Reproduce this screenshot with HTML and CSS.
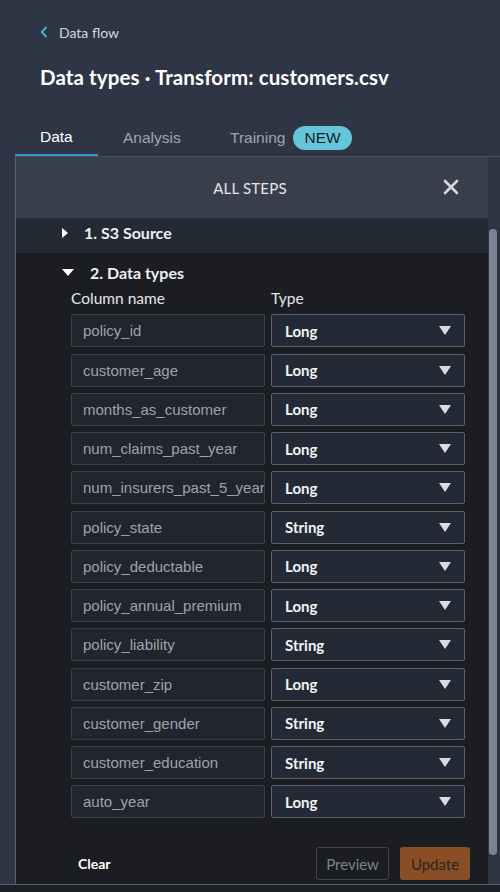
FILE: index.html
```html
<!DOCTYPE html>
<html>
<head>
<meta charset="utf-8">
<link rel="stylesheet" href="styles.css">
</head>
<body>
<div class="page">
  <div class="top">
    <div class="back">
      <svg class="chev" width="8" height="12" viewBox="0 0 8 12"><path d="M6.5 1 L1.8 6 L6.5 11" fill="none" stroke="#3fb4d0" stroke-width="2"/></svg>
      <span>Data flow</span>
    </div>
    <h1 class="title">Data types · Transform: customers.csv</h1>
    <div class="tabs">
      <div class="tab">Data</div>
      <div class="tab">Analysis</div>
      <div class="tab">Training <span class="badge">NEW</span></div>
    </div>
  </div>
  <div class="panel">
    <div class="panel-head">
      <span class="panel-title">ALL STEPS</span>
      <svg class="close" width="16" height="16" viewBox="0 0 16 16"><path d="M2 2 L14 14 M14 2 L2 14" stroke="#d5d8dc" stroke-width="2.6" stroke-linecap="round"/></svg>
    </div>
    <div class="panel-body">
      <div class="content">
        <div class="step collapsed">
          <span class="tri-right"></span>
          <span class="step-name">1. S3 Source</span>
        </div>
        <div class="step expanded">
          <span class="tri-down"></span>
          <span class="step-name">2. Data types</span>
        </div>
        <div class="grid">
          <div class="col-head">Column name</div>
          <div class="col-head">Type</div>

          <div class="inp">policy_id</div><div class="sel">Long<i></i></div>
          <div class="inp">customer_age</div><div class="sel">Long<i></i></div>
          <div class="inp">months_as_customer</div><div class="sel">Long<i></i></div>
          <div class="inp">num_claims_past_year</div><div class="sel">Long<i></i></div>
          <div class="inp">num_insurers_past_5_years</div><div class="sel">Long<i></i></div>
          <div class="inp">policy_state</div><div class="sel">String<i></i></div>
          <div class="inp">policy_deductable</div><div class="sel">Long<i></i></div>
          <div class="inp">policy_annual_premium</div><div class="sel">Long<i></i></div>
          <div class="inp">policy_liability</div><div class="sel">String<i></i></div>
          <div class="inp">customer_zip</div><div class="sel">Long<i></i></div>
          <div class="inp">customer_gender</div><div class="sel">String<i></i></div>
          <div class="inp">customer_education</div><div class="sel">String<i></i></div>
          <div class="inp">auto_year</div><div class="sel">Long<i></i></div>
        </div>
        <div class="footer">
          <span class="clear">Clear</span>
          <div class="btns">
            <span class="btn preview">Preview</span>
            <span class="btn update">Update</span>
          </div>
        </div>
      </div>
      <div class="gutter"><div class="thumb"></div></div>
    </div>
  </div>
  <div class="bottom"></div>
</div>
</body>
</html>
```

FILE: styles.css
```css
* { box-sizing: border-box; }
html, body { margin: 0; padding: 0; }
body {
  background: #2e3646;
  width: 500px;
  height: 892px;
  overflow: hidden;
  font-family: Lato, "Open Sans", sans-serif;
  color: #fff;
}
.page { display: flex; flex-direction: column; height: 892px; }
.top { padding: 23px 0 0 40px; }
.back { display: flex; align-items: center; gap: 11px; height: 18px; font-size: 14px; color: #d4d8de; }
.chev { display: block; }
.title {
  margin: 23px 0 0 0;
  font-size: 20.5px;
  font-weight: 700;
  color: #fff;
  line-height: 26px;
  letter-spacing: 0.1px;
}
.tabs { display: flex; margin: 32px 0 0 -25px; height: 34px; }
.tab {
  font-family: "Liberation Sans", Arial, sans-serif;
  font-size: 15.5px;
  color: #a0a5ad;
  display: flex; align-items: center;
  height: 34px;
  padding: 0 0 3px 0;
}
.tab:nth-child(1) { width: 83px; padding-left: 25px; color: #fff; border-bottom: 2px solid #2d97d4; }
.tab:nth-child(2) { width: 107px; padding-left: 25px; }
.tab:nth-child(3) { padding-left: 25px; }
.badge {
  margin-left: 8px;
  background: #66c6d9;
  color: #16202b;
  border-radius: 12px;
  height: 24px;
  padding: 0 11px;
  display: inline-flex; align-items: center;
  font-size: 15.5px;
}
.panel {
  margin-left: 15px;
  flex: 0 0 auto;
  border-left: 1px solid #5a616c;
  border-top: 1px solid #4b525d;
  display: flex; flex-direction: column;
  height: 728px;
}
.panel-head {
  height: 61px;
  background: #383f4a;
  display: flex; align-items: center; justify-content: center;
  position: relative;
  margin-right: 12px;
}
.panel-title { font-size: 15px; color: #e4e6ea; letter-spacing: 0.2px; margin-left: -4px; }
.close { position: absolute; right: 29px; top: 22px; }
.panel-body { flex: 1; display: flex; }
.content { flex: 1; background: #1b1d22; display: flex; flex-direction: column; }
.gutter { width: 12px; background: #2e3646; padding: 11px 0 0 1px; }
.thumb { width: 8px; height: 626px; background: #7a8494; border-radius: 4px; }
.step { display: flex; align-items: center; font-weight: 700; font-size: 16px; color: #eef0f2; }
.step.collapsed { height: 35px; background: #242a34; padding-left: 46px; padding-bottom: 6px; }
.step.expanded { height: 38px; padding-left: 46px; }
.tri-right { width: 0; height: 0; border-top: 5px solid transparent; border-bottom: 5px solid transparent; border-left: 6px solid #fff; margin-right: 16px; }
.tri-down { width: 0; height: 0; border-left: 6px solid transparent; border-right: 6px solid transparent; border-top: 7px solid #fff; margin-right: 16px; }
.grid {
  display: grid;
  grid-template-columns: 194px 194px;
  column-gap: 6px;
  row-gap: 6.25px;
  padding-left: 55px;
  margin-top: -2px;
}
.col-head { font-size: 15.5px; color: #e4e6ea; height: 18px; line-height: 18px; margin-bottom: 1px; }
.inp {
  height: 33px;
  border: 1px solid #3b414b;
  background: #20252e;
  border-radius: 2px;
  font-family: "Liberation Sans", Arial, sans-serif;
  font-size: 15px;
  color: #9ea3ab;
  padding: 0 11px;
  display: flex; align-items: center;
  white-space: nowrap; overflow: hidden;
}
.sel {
  height: 33px;
  border: 1px solid #5b626c;
  background: #232a36;
  border-radius: 2px;
  font-weight: 700;
  font-size: 15px;
  color: #f2f3f5;
  padding: 0 13px;
  display: flex; align-items: center; justify-content: space-between;
}
.sel i {
  width: 0; height: 0;
  border-left: 6px solid transparent; border-right: 6px solid transparent;
  border-top: 9px solid #d9dce0;
}
.footer {
  display: flex; align-items: center; justify-content: space-between;
  padding: 0 18px 0 62px;
  margin-top: 29px;
}
.clear { font-weight: 700; font-size: 14px; color: #fff; }
.btns { display: flex; gap: 11px; }
.btn {
  height: 33px;
  display: inline-flex; align-items: center;
  font-size: 15px;
  border-radius: 3px;
  padding: 0 12px;
}
.preview { border: 1px solid #3f454f; color: #7d838c; width: 73px; justify-content: center; }
.update { background: #8a4e27; color: #2b2520; width: 70px; justify-content: center; }
.bottom { flex: 1; border-top: 1px solid #5c626b; background: #1d2026; }
```
